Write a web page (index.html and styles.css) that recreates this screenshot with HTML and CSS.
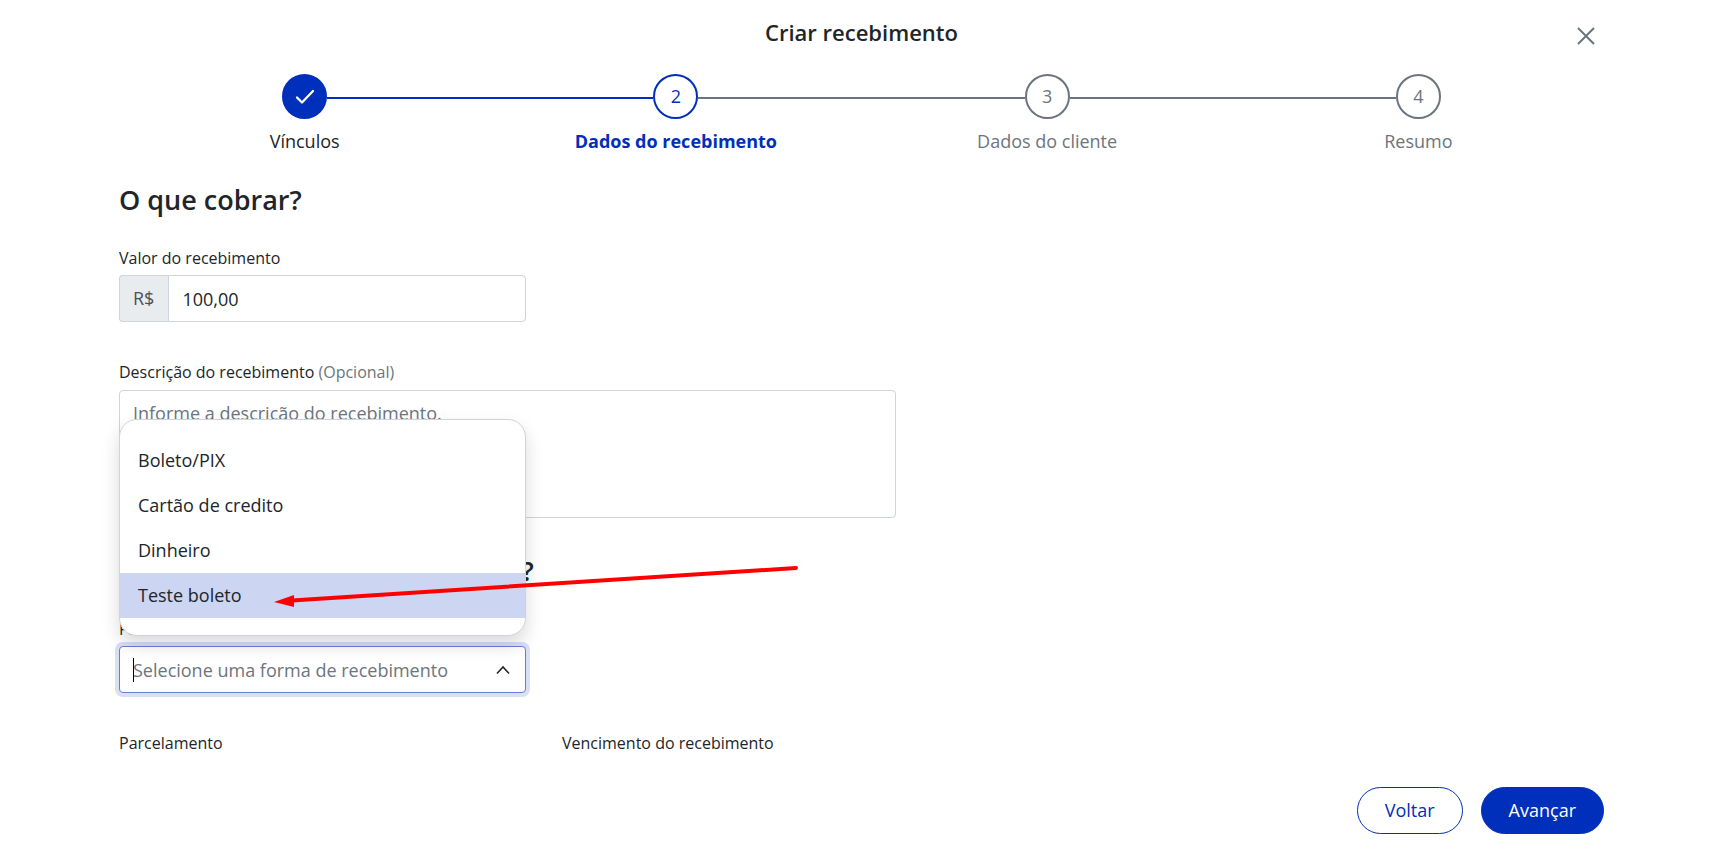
FILE: index.html
```html
<!DOCTYPE html>
<html lang="pt-BR">
<head>
<meta charset="utf-8">
<title>Criar recebimento</title>
<link rel="stylesheet" href="styles.css">
</head>
<body>
<div class="page">
  <header class="header">
    <h1 class="title">Criar recebimento</h1>
    <button class="close" type="button" aria-label="Fechar">
      <svg width="18" height="18" viewBox="0 0 18 18"><path d="M1 1l16 16M17 1L1 17" stroke="currentColor" stroke-width="2" fill="none"/></svg>
    </button>
  </header>

  <ol class="steps">
    <li class="step done">
      <div class="track"><span class="circle"><svg width="20" height="16" viewBox="0 0 20 16"><path d="M2 8.500l5 5L18 2" fill="none" stroke="currentColor" stroke-width="2.300" stroke-linecap="round" stroke-linejoin="round"/></svg></span></div>
      <span class="step-label">Vínculos</span>
    </li>
    <li class="step current">
      <div class="track"><span class="circle">2</span></div>
      <span class="step-label">Dados do recebimento</span>
    </li>
    <li class="step">
      <div class="track"><span class="circle">3</span></div>
      <span class="step-label">Dados do cliente</span>
    </li>
    <li class="step">
      <div class="track"><span class="circle">4</span></div>
      <span class="step-label">Resumo</span>
    </li>
  </ol>

  <main class="form">
    <h2 class="section wide">O que cobrar?</h2>
    <div class="field">
      <label for="valor">Valor do recebimento</label>
      <div class="group">
        <span class="prefix">R$</span>
        <input id="valor" class="control" type="text" value="100,00">
      </div>
    </div>
    <div class="field description">
      <label for="descricao">Descrição do recebimento <span class="muted">(Opcional)</span></label>
      <textarea id="descricao" class="control area" placeholder="Informe a descrição do recebimento."></textarea>
    </div>
    <h2 class="section wide second">Como será feito o recebimento?</h2>
    <div class="field method">
      <label for="forma">Forma de recebimento</label>
      <div class="combo">
        <input id="forma" class="control focused" type="text" role="combobox" aria-expanded="true" aria-controls="opcoes" placeholder="Selecione uma forma de recebimento">
        <span class="caret"></span>
        <svg class="chevron" width="16" height="10" viewBox="0 0 16 10"><path d="M2 8.500l6-6.500 6 6.500" fill="none" stroke="currentColor" stroke-width="1.600"/></svg>
        <ul id="opcoes" class="menu" role="listbox">
          <li role="option">Boleto/PIX</li>
          <li role="option">Cartão de credito</li>
          <li role="option">Dinheiro</li>
          <li role="option" class="active" aria-selected="true">Teste boleto</li>
        </ul>
        <svg class="arrow" width="526" height="44" viewBox="0 0 526 44"><path d="M18 35.500L522 3" stroke="#f00" stroke-width="4" stroke-linecap="round"/><path d="M0 37l20-7v12z" fill="#f00"/></svg>
      </div>
    </div>
    <p class="caption first">Parcelamento</p>
    <p class="caption">Vencimento do recebimento</p>
  </main>

  <footer class="footer">
    <button class="btn outline" type="button">Voltar</button>
    <button class="btn solid" type="button">Avançar</button>
  </footer>
</div>
</body>
</html>
```
FILE: styles.css
```css
* { box-sizing: border-box; }
body {
  margin: 0;
  background: #fff;
  color: #212529;
  font: 18px/27px "Open Sans", "Noto Sans", sans-serif;
}
h1, h2, p, ul, ol { margin: 0; padding: 0; }
ul, ol { list-style: none; }
button, input, textarea { font: inherit; color: inherit; }

.page {
  display: flex;
  flex-direction: column;
  min-height: 100vh;
  padding: 16px 105px 21px 119px;
}
.header {
  display: grid;
  grid-template-columns: 36px 1fr 36px;
  align-items: center;
  height: 40px;
}
.title {
  grid-column: 2;
  text-align: center;
  font-size: 22px;
  line-height: 32px;
  font-weight: 600;
  padding-bottom: 8px;
}
.close {
  display: flex;
  justify-content: center;
  padding: 0;
  border: 0;
  background: none;
  color: #6c757d;
}

.steps {
  display: grid;
  grid-template-columns: repeat(4, 1fr);
  margin-top: 18px;
}
.step {
  text-align: center;
  color: #6c757d;
}
.track {
  display: flex;
  align-items: center;
}
.track::before, .track::after {
  content: "";
  flex: 1;
  height: 2px;
  margin-top: 2px;
  background: #6c757d;
}
.step:first-child .track::before, .step:last-child .track::after { background: none; }
.done .track::after, .current .track::before { background: #002fbb; }
.circle {
  display: flex;
  align-items: center;
  justify-content: center;
  width: 45px;
  height: 45px;
  border: 2px solid #6c757d;
  border-radius: 50%;
}
.done .circle { background: #002fbb; border-color: #002fbb; color: #fff; }
.current .circle { border-color: #002fbb; }
.step-label { display: block; margin-top: 9px; }
.done .step-label { color: #212529; }
.current { color: #002fbb; }
.current .step-label { font-weight: 700; }

.form {
  display: grid;
  grid-template-columns: 407fr 334fr 672fr;
  column-gap: 36px;
  padding-top: 28px;
}
.section {
  font-size: 27px;
  line-height: 34px;
  font-weight: 600;
}
.wide { grid-column: 1 / -1; }
.field {
  display: flex;
  flex-direction: column;
  grid-column: 1;
  margin-top: 29px;
}
.field label, .caption {
  font-size: 16px;
  line-height: 24px;
}
.field label { margin-bottom: 5px; }
.muted { color: #6c757d; }
.control {
  display: block;
  width: 100%;
  height: 47px;
  padding: 9px 13px;
  border: 1px solid #ced4da;
  border-radius: 4px;
  background: #fff;
  outline: 0;
}
.control::placeholder { color: #6c757d; opacity: 1; }
.group { display: flex; }
.prefix {
  padding: 9px 14px 9px 13px;
  border: 1px solid #ced4da;
  border-right: 0;
  border-radius: 4px 0 0 4px;
  background: #e9ecef;
  color: #495057;
}
.group .control { flex: 1; border-radius: 0 4px 4px 0; }
.description { grid-column: 1 / 3; margin-top: 38px; }
.description label { margin-bottom: 6px; }
.area { height: 128px; resize: none; }
.second { margin-top: 36px; }
.method { margin-top: 29px; }

.combo { position: relative; }
.focused {
  border-color: #6680d6;
  box-shadow: 0 0 0 4px #d9dff5;
}
.caret {
  position: absolute;
  left: 14px;
  top: 12px;
  width: 1px;
  height: 24px;
  background: #000;
}
.chevron {
  position: absolute;
  right: 15px;
  top: 19px;
}
.menu {
  position: absolute;
  left: 0;
  right: 0;
  bottom: 57px;
  padding: 18px 0 17px;
  border: 1px solid #ced4da;
  border-radius: 18px;
  background: #fff;
  box-shadow: 0 9px 18px rgba(0, 0, 0, .15);
}
.menu li { padding: 9px 18px; }
.menu .active { background: #ccd5f1; }
.arrow {
  position: absolute;
  left: 155px;
  bottom: 84px;
}
.first { grid-column: 1; }
.caption { margin-top: 38px; }

.footer {
  display: flex;
  justify-content: flex-end;
  gap: 18px;
  margin-top: auto;
}
.btn {
  height: 47px;
  padding: 0 27px;
  border: 1px solid #002fbb;
  border-radius: 24px;
}
.outline { background: #fff; color: #002fbb; }
.solid { background: #002fbb; color: #fff; }
```
